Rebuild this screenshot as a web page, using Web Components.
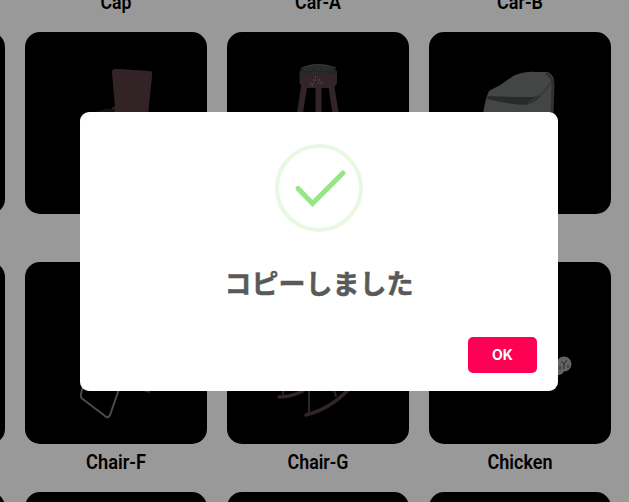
<!DOCTYPE html>
<html lang="ja">
<head>
<meta charset="utf-8">
<title>Models</title>
<style>
  html, body { margin: 0; height: 100%; overflow: hidden; background: #999; }
</style>
</head>
<body>
<model-gallery></model-gallery>
<alert-dialog button="OK">コピーしました</alert-dialog>

<script>
  // Art for each model, drawn on the 182px tile
  const ART = {
    chairB: `
      <path d="M70 82q6-5 16-5l4-3-3-34q0-3 4-3l33 2q4 0 3 4l-4 39z" fill="#30231f"/>
      <path d="M70 82q6-5 16-5l4-3-3-34q0-3 4-3l33 2q4 0 3 4l-4 39z" fill="#33232a" opacity=".7"/>
      <path d="M66 82q8-5 24-5l-1 5z" fill="#161214"/>`,
    stool: `
      <path d="M77.500 52l-5 32M91.500 52v32M104 52l5 32" stroke="#33242a" stroke-width="6"/>
      <path d="M72.500 39v12q2 4 6 5h26q4-1 5.500-5V39z" fill="#33242a"/>
      <path d="M73 41q-1-8 18-9 19 1 18.500 9-18 3-36.500 0z" fill="#242626"/>
      <path d="M74 36q17-7 35 0" fill="none" stroke="#353737"/>
      <path d="M77 38h28M79 36h24M81 34h20M83 41h18" stroke="#454747" stroke-width=".8" stroke-dasharray="1 1.500"/>
      <path d="M88 45h2M86 48h8M84 51h4M91 51h5M83 53h3" stroke="#69595c" stroke-dasharray="1 1"/>`,
    armchair: `
      <path d="M54 82q2-14 6-23 13-6 24-15 12-5 23-4l12 0q6 3 6 10l-1 32z" fill="#444646"/>
      <path d="M59 64q22 1 44 1l9-1q-8 8-16 9-18-1-38-6z" fill="#292b2b"/>
      <path d="M122 50q-4 9-14 15l-10 8" fill="none" stroke="#383a3a" stroke-width="2"/>
      <path d="M117 41q6 3 7 11l-1 30" fill="none" stroke="#303232" stroke-width="3"/>`,
    chairF: `
      <path d="M58 124l-2 8q-1 4 3 6l21 16q3 3 5-1l9-26" fill="none" stroke="#4b4949" stroke-width="2"/>
      <path d="M118 128l7 2" stroke="#2c2a2a" stroke-width="2"/>`,
    chairG: `
      <g fill="none" stroke="#31242a" stroke-linecap="round">
        <path d="M52 135q12 0 24-6M79 153q24-6 43-26" stroke-width="3.500"/>
        <path d="M57 125l-1 7M82 126v25M106 126l3 8" stroke-width="2"/>
      </g>`,
    chicken: `
      <g fill="#656262">
        <circle cx="135" cy="102" r="7.500"/>
        <circle cx="130" cy="108" r="5"/>
      </g>
      <path d="M132 99l3 3 3-4M135 102v5M131 104v4M139 103v3" fill="none" stroke="#292626"/>`
  };

  // width = drawn width of the name in px
  const ROWS = [
    [{}, { name: "Cap", width: 31 }, { name: "Car-A", width: 46 }, { name: "Car-B", width: 46 }],
    [{}, { art: "chairB" }, { art: "stool" }, { art: "armchair" }],
    [{}, { name: "Chair-F", width: 60, art: "chairF" }, { name: "Chair-G", width: 61, art: "chairG" }, { name: "Chicken", width: 65, art: "chicken" }],
    [{}, {}, {}, {}]
  ];

  class ModelCard extends HTMLElement {
    constructor() {
      super();
      this.attachShadow({ mode: "open" });
    }

    connectedCallback() {
      const name = this.getAttribute("name") || "";
      const width = this.getAttribute("width") || 0;
      const label = name
        ? `<svg width="182" height="48"><text x="91" y="24.500" text-anchor="middle" textLength="${width}" lengthAdjust="spacingAndGlyphs">${name}</text></svg>`
        : "";
      this.shadowRoot.innerHTML = `
        <style>
          :host { display: flex; flex-direction: column; flex: none; width: 182px; height: 230px; }
          .tile { height: 182px; border-radius: 15px; background: #000; overflow: hidden; }
          .tile svg { filter: blur(.4px); }
          .label { height: 48px; }
          svg { display: block; }
          text { font: 600 19.500px Roboto, "Liberation Sans", sans-serif; fill: #000; }
        </style>
        <div class="tile">
          <svg width="182" height="182" viewBox="0 0 182 182">${ART[this.getAttribute("art")] || ""}</svg>
        </div>
        <div class="label">${label}</div>
      `;
    }
  }

  class ModelGallery extends HTMLElement {
    constructor() {
      super();
      this.attachShadow({ mode: "open" });
      const rows = ROWS.map(row => `
        <div class="row">
          ${row.map(m => `<model-card name="${m.name || ""}" width="${m.width || 0}" art="${m.art || ""}"></model-card>`).join("")}
        </div>`).join("");
      this.shadowRoot.innerHTML = `
        <style>
          :host { display: block; height: 502px; overflow: hidden; }
          .rows { margin-top: -198px; padding-right: 18px; }
          .row { display: flex; justify-content: flex-end; gap: 20px; }
        </style>
        <div class="rows">${rows}</div>
      `;
    }
  }

  class SuccessIcon extends HTMLElement {
    constructor() {
      super();
      this.attachShadow({ mode: "open" });
      this.shadowRoot.innerHTML = `
        <style>
          :host { display: block; width: 88px; height: 88px; }
          svg { display: block; }
        </style>
        <svg width="88" height="88" viewBox="0 0 88 88" fill="none">
          <circle cx="44" cy="44" r="42" stroke="#e9f8e3" stroke-width="4"/>
          <path d="M23 44.500L37.500 59.500L68 29" stroke="#98e587" stroke-width="5" stroke-linecap="round"/>
        </svg>
      `;
    }
  }

  class AlertDialog extends HTMLElement {
    constructor() {
      super();
      this.attachShadow({ mode: "open" });
    }

    connectedCallback() {
      this.shadowRoot.innerHTML = `
        <style>
          :host { position: absolute; left: 80px; top: 112px; width: 478px; height: 279px; box-sizing: border-box;
            display: flex; flex-direction: column; align-items: center; padding: 32px 21px 18px; border-radius: 9px; background: #fff; }
          .title { margin-top: 31px; font: 700 27px/40px "Noto Sans CJK JP", sans-serif; color: #595959; white-space: nowrap;
            -webkit-text-stroke: .5px #595959; }
          .footer { display: flex; justify-content: flex-end; width: 100%; margin-top: auto; }
          button { width: 69px; height: 36px; padding: 0 0 1px; border: 0; border-radius: 5px; background: #ff0055; color: #fff;
            font: 700 14px Inter, "Liberation Sans", sans-serif; }
        </style>
        <success-icon></success-icon>
        <div class="title"><slot></slot></div>
        <div class="footer"><button>${this.getAttribute("button")}</button></div>
      `;
    }
  }

  customElements.define("model-card", ModelCard);
  customElements.define("model-gallery", ModelGallery);
  customElements.define("success-icon", SuccessIcon);
  customElements.define("alert-dialog", AlertDialog);
</script>
</body>
</html>
